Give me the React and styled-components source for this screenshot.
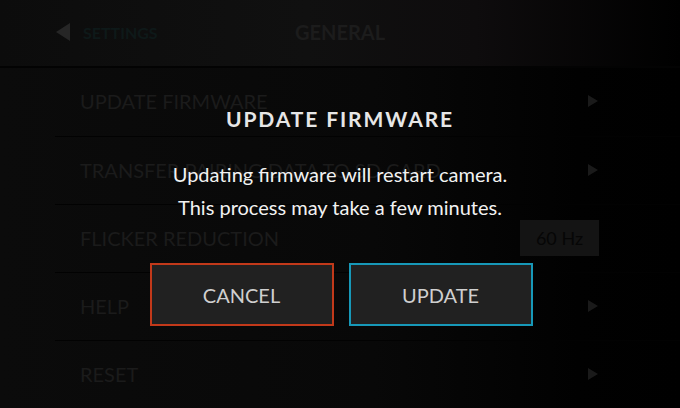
import styled, { createGlobalStyle } from "styled-components";

const GlobalStyle = createGlobalStyle`
  html, body {
    margin: 0;
    padding: 0;
    background: #000;
  }
  body {
    font-family: Lato, "Noto Sans", sans-serif;
  }
`;

const Screen = styled.div`
  position: relative;
  width: 680px;
  height: 408px;
  overflow: hidden;
  background: linear-gradient(90deg, #0b0b0b 0%, #080808 55%, #010101 85%, #000 100%);
`;

const Header = styled.div`
  height: 68px;
  box-sizing: border-box;
  display: grid;
  grid-template-columns: 1fr auto 1fr;
  align-items: center;
  padding: 0 56px 2px;
  border-bottom: 2px solid #030303;
  background: linear-gradient(90deg, #0c0c0c 0%, #101010 45%, #0e0c0d 70%, #000 100%);
`;

const Back = styled.div`
  display: flex;
  align-items: center;
  gap: 13px;
  color: #0e1919;
  font-weight: 700;
  font-size: 16px;
`;

const Triangle = styled.span`
  width: 0;
  height: 0;
  border-top: ${(p) => p.size / 2}px solid transparent;
  border-bottom: ${(p) => p.size / 2}px solid transparent;
  border-${(p) => (p.dir === "left" ? "right" : "left")}: ${(p) => p.size * 0.8}px solid ${(p) => p.color};
`;

const Title = styled.div`
  color: #1c1c1c;
  font-weight: 700;
  font-size: 20px;
`;

const List = styled.div`
  display: flex;
  flex-direction: column;
`;

const Row = styled.div`
  height: 68px;
  box-sizing: border-box;
  margin-left: 55px;
  padding: 0 82px 2px 25px;
  display: flex;
  align-items: center;
  justify-content: space-between;
  border-top: ${(p) => (p.first ? "none" : "1px solid #020202")};
  color: #1b1b1b;
  font-size: 20px;
`;

const ValueBox = styled.div`
  width: 79px;
  height: 36px;
  margin-right: -1px;
  display: flex;
  align-items: center;
  justify-content: center;
  background: #141414;
  color: #060606;
  font-size: 18px;
`;

const Dialog = styled.div`
  position: absolute;
  inset: 0;
  display: flex;
  flex-direction: column;
  align-items: center;
  padding-top: 105px;
  box-sizing: border-box;
`;

const DialogTitle = styled.div`
  color: #e6e6e6;
  font-weight: 700;
  font-size: 21px;
  letter-spacing: 1.9px;
  line-height: 28px;
`;

const Message = styled.div`
  margin-top: 25px;
  color: #f2f2f2;
  font-size: 20px;
  line-height: 33px;
  text-align: center;
`;

const Buttons = styled.div`
  margin-top: 39px;
  margin-left: 2px;
  display: flex;
  gap: 15px;
`;

const Button = styled.div`
  width: 184px;
  height: 63px;
  box-sizing: border-box;
  display: flex;
  align-items: center;
  justify-content: center;
  background: #212121;
  border: 2px solid ${(p) => p.accent};
  color: #cfcfcf;
  font-size: 20px;
`;

const rows = [
  { label: "UPDATE FIRMWARE", arrow: true },
  { label: "TRANSFER PAIRING DATA TO SD CARD", arrow: true },
  { label: "FLICKER REDUCTION", value: "60 Hz" },
  { label: "HELP", arrow: true },
  { label: "RESET", arrow: true },
];

export default function App() {
  return (
    <>
      <GlobalStyle />
      <Screen>
        <Header>
          <Back>
            <Triangle dir="left" size={18} color="#262626" />
            SETTINGS
          </Back>
          <Title>GENERAL</Title>
          <div />
        </Header>
        <List>
          {rows.map((row, i) => (
            <Row key={row.label} first={i === 0}>
              {row.label}
              {row.value ? (
                <ValueBox>{row.value}</ValueBox>
              ) : (
                <Triangle dir="right" size={13} color="#1a1a1a" />
              )}
            </Row>
          ))}
        </List>
        <Dialog>
          <DialogTitle>UPDATE FIRMWARE</DialogTitle>
          <Message>
            Updating firmware will restart camera.
            <br />
            This process may take a few minutes.
          </Message>
          <Buttons>
            <Button accent="#c2391a">CANCEL</Button>
            <Button accent="#1798b8">UPDATE</Button>
          </Buttons>
        </Dialog>
      </Screen>
    </>
  );
}
